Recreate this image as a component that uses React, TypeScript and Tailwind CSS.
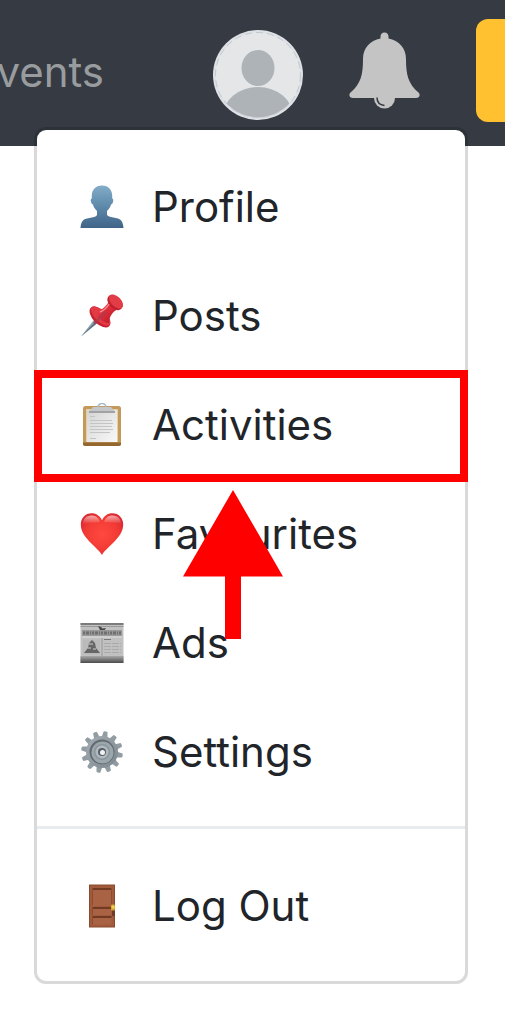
import type { ReactNode } from 'react';

type MenuItem = {
  label: string;
  icon: ReactNode;
  highlighted?: boolean;
};

const iconClass = 'h-11 w-11 shrink-0';

const ProfileIcon = () => (
  <svg viewBox="0 0 44 44" className={iconClass} aria-hidden="true">
    <defs>
      <linearGradient id="bust" x1="0" y1="0" x2="0" y2="1">
        <stop offset="0" stopColor="#82acc9" />
        <stop offset="0.55" stopColor="#5b85a6" />
        <stop offset="1" stopColor="#3f6487" />
      </linearGradient>
    </defs>
    <path
      d="M22 0.5c-6.5 0-10.2 4.3-10.2 10.3 0 1.2 0 2-.2 3-1 .2-1 1.4-.7 2.7.3 1.5.9 2.700 1.900 2.800.9 3 2.200 5 4.200 6.700v3.200c0 1.500-1 2.200-3 2.700l-8 1.900C2.500 34.500.9 38 .5 43h43c-.4-5-2-8.500-5.500-9.400l-8-1.900c-2-.5-3-1.200-3-2.700V26c2-1.700 3.300-3.700 4.200-6.700 1-.1 1.600-1.300 1.900-2.800.3-1.300.3-2.500-.7-2.700-.2-1-.2-1.800-.2-3C32.200 4.800 28.500.5 22 .5z"
      fill="url(#bust)"
    />
  </svg>
);

const PinIcon = () => (
  <svg viewBox="0 0 44 44" className={iconClass} aria-hidden="true">
    <defs>
      <linearGradient id="pinBody" x1="0" y1="0" x2="1" y2="1">
        <stop offset="0" stopColor="#f0525a" />
        <stop offset="0.5" stopColor="#dc2b38" />
        <stop offset="1" stopColor="#b01626" />
      </linearGradient>
    </defs>
    <path d="M1 42.500L17 22l4 4z" fill="#8fa3b1" />
    <path d="M1 42.500L19 24l2 2z" fill="#5f7484" />
    <ellipse cx="20" cy="23" rx="13" ry="7" transform="rotate(45 20 23)" fill="#c91f2f" />
    <ellipse cx="20.500" cy="22" rx="12.500" ry="5.500" transform="rotate(45 20.500 22)" fill="#e23a45" />
    <path d="M15 17c6 0 11-4 14-10l9 8c-6 3-9 8-9 14-6 0-12-6-14-12z" fill="url(#pinBody)" />
    <ellipse cx="35" cy="8.500" rx="9" ry="6" transform="rotate(45 35 8.500)" fill="#c31f2f" />
    <ellipse cx="36" cy="7.500" rx="8.500" ry="5" transform="rotate(45 36 7.500)" fill="#e23c46" />
    <path d="M13 28.500l12-12 2 2-12 12z" fill="#a83a4b" opacity="0.7" />
    <path d="M20 18c4-1.500 7-4.500 9-8" stroke="#f58a8e" strokeWidth="1.500" fill="none" />
  </svg>
);

const ClipboardIcon = () => (
  <svg viewBox="0 0 44 44" className={iconClass} aria-hidden="true">
    <defs>
      <linearGradient id="paper" x1="0" y1="0" x2="1" y2="1">
        <stop offset="0" stopColor="#d4d4d4" />
        <stop offset="1" stopColor="#f8f8f8" />
      </linearGradient>
    </defs>
    <rect x="3" y="3" width="38" height="40" rx="2.500" fill="#c49a5c" />
    <path d="M3 39.500h38v1a2.500 2.500 0 0 1-2.500 2.500h-33A2.500 2.500 0 0 1 3 40.500z" fill="#94672f" />
    <rect x="6" y="6" width="32" height="33" fill="#e7cfa5" />
    <rect x="7" y="7" width="30" height="32" fill="url(#paper)" />
    <path d="M18 4.500a4 4 0 0 1 8 0" fill="none" stroke="#a9bccb" strokeWidth="1.700" />
    <path d="M13 4h18l4 4.500H9z" fill="#c4c7ca" />
    <path d="M9 8h26v2H9z" fill="#a2a2a2" />
    <g stroke="#c4c4c4" strokeWidth="1">
      <path d="M10 13.500h5M10 17.500h22M10 20.500h23M10 23.500h22M10 26.500h23M10 29.500h20M10 35.500h6" />
    </g>
  </svg>
);

const HeartIcon = () => (
  <svg viewBox="0 0 44 44" className={iconClass} aria-hidden="true">
    <defs>
      <radialGradient id="heart" cx="0.5" cy="0.5" r="0.55">
        <stop offset="0" stopColor="#ff4a3f" />
        <stop offset="0.7" stopColor="#f23a35" />
        <stop offset="1" stopColor="#dc2b31" />
      </radialGradient>
      <linearGradient id="shine" x1="0" y1="0" x2="0" y2="1">
        <stop offset="0" stopColor="#fff" stopOpacity="0.6" />
        <stop offset="1" stopColor="#fff" stopOpacity="0" />
      </linearGradient>
    </defs>
    <path
      d="M22 43C18 35.500.8 26 .8 12.500.8 6 5.600 1.300 11.500 1.300c5 0 8.500 2.700 10.500 7 2-4.300 5.500-7 10.500-7 5.900 0 10.700 4.700 10.700 11.200C43.200 26 26 35.500 22 43z"
      fill="url(#heart)"
    />
    <path d="M3 12c0-5 3.500-8.500 8.500-8.500 4 0 7 2 8.500 6.500-5 1-12 0-17 2zM24 10c1.500-4.500 4.500-6.500 8.500-6.500 5 0 8.500 3.500 8.500 8.500-5-2-12-1-17-2z" fill="url(#shine)" />
  </svg>
);

const NewspaperIcon = () => (
  <svg viewBox="0 0 44 44" className={iconClass} aria-hidden="true">
    <defs>
      <linearGradient id="fold" x1="0" y1="0" x2="0" y2="1">
        <stop offset="0" stopColor="#a8a8a8" />
        <stop offset="1" stopColor="#4b4b4b" />
      </linearGradient>
    </defs>
    <path d="M0.500 2h43v40H0.500z" fill="#c1c1c1" />
    <path d="M0.500 2h43v2H0.500z" fill="#7c7c7c" />
    <path d="M0.500 5.500h43" stroke="#999" />
    <path d="M18 5l3 1 1.500 1.500L26 7l-2 3-4-1z" fill="#474747" />
    <path d="M2 9h40v6H2z" fill="#999" />
    <path d="M3 12h38" stroke="#6f6f6f" strokeWidth="3" strokeDasharray="2 1 3 1 1 1" />
    <path d="M2 16h40" stroke="#ddd" />
    <path d="M3 18.500h17v15H3z" fill="#bababa" />
    <path d="M4 32l4-5 1-5 3-3 3 3 1 5 4 5z" fill="#666" />
    <path d="M9 23h4M8 27h3m2 1h3" stroke="#aaa" strokeWidth="1.500" />
    <path d="M22 17v18" stroke="#999" />
    <path d="M24 18.500h7" stroke="#777" />
    <path d="M24 22.500h17M24 25.500h17M24 28.500h17M24 31.500h17" stroke="#aaa" strokeDasharray="7 1" />
    <path d="M0.500 35h43v7H0.500z" fill="url(#fold)" />
  </svg>
);

const teeth = [0, 30, 60, 90, 120, 150, 180, 210, 240, 270, 300, 330];

const GearIcon = () => (
  <svg viewBox="0 0 44 44" className={iconClass} aria-hidden="true">
    <defs>
      <linearGradient id="gear" x1="0" y1="0" x2="1" y2="1">
        <stop offset="0" stopColor="#a4adb3" />
        <stop offset="1" stopColor="#7c868d" />
      </linearGradient>
    </defs>
    {teeth.map((angle) => (
      <path
        key={angle}
        d="M19 8l1-6.500q2-1 4 0L25 8z"
        transform={`rotate(${angle + 10} 22 22)`}
        fill="#929ca3"
      />
    ))}
    <circle cx="22" cy="22" r="16" fill="url(#gear)" />
    <circle cx="22" cy="22" r="12.500" fill="#626a70" />
    <circle cx="22.500" cy="22.500" r="11" fill="#9ca6ad" />
    <circle cx="22" cy="22" r="8" fill="#8a959c" />
    <circle cx="22" cy="22" r="6.500" fill="#b2bac0" />
    <circle cx="22" cy="22" r="4" fill="#58616a" />
    <circle cx="22.500" cy="22.500" r="2.500" fill="#f1f1f1" />
  </svg>
);

const DoorIcon = () => (
  <svg viewBox="0 0 44 44" className={iconClass} aria-hidden="true">
    <path d="M9 0.500h26v43H9z" fill="#8b4a2f" />
    <path d="M10 1.500h24v41H10z" fill="#a05a3c" />
    <path d="M12.500 4h19v18h-19zM12.500 23h19v8h-19zM12.500 32.500h19v8h-19z" fill="#a96243" />
    <path d="M12.500 5h19M12.500 24h19M12.500 33h19" stroke="#713a22" strokeWidth="2" />
    <path d="M12.500 4v17M31.500 4v17M12.500 25v6M12.500 34v6" stroke="#8c4c31" />
    <path d="M32 26h3v6h-3z" fill="#6f3c25" />
    <rect x="31" y="20.500" width="4" height="6" rx="1" fill="#d3a72e" />
    <circle cx="33" cy="23" r="1.500" fill="#f0cf57" />
  </svg>
);

const BellIcon = () => (
  <svg viewBox="0 0 71 82" className="h-[82px] w-[71px]" aria-hidden="true">
    <path
      d="M35.500 0.500c-2.600 0-4 1.800-4 4v2C21 8.500 14 16 14 27c0 15-2 25-12.500 33.500C-1 63 1 66 4 66h63c3 0 5-3 2.500-5.500C59 52 57 42 57 27c0-11-7-18.500-17.500-20.500v-2c0-2.200-1.400-4-4-4z"
      fill="#c4c4c4"
    />
    <circle cx="35.500" cy="66" r="10.500" fill="#c4c4c4" />
    <path d="M28 65.500c0 4.500 3 7.500 7.500 8" fill="none" stroke="#343a40" strokeWidth="1.500" />
  </svg>
);

const AvatarIcon = () => (
  <svg viewBox="0 0 90 90" className="h-[90px] w-[90px]" aria-hidden="true">
    <defs>
      <clipPath id="face">
        <circle cx="45" cy="45" r="42.500" />
      </clipPath>
    </defs>
    <circle cx="45" cy="45" r="45" fill="#dee2e6" />
    <circle cx="45" cy="45" r="42.500" fill="#e4e6e8" />
    <g clipPath="url(#face)" fill="#adb3b7">
      <ellipse cx="45" cy="38" rx="16.500" ry="18" />
      <ellipse cx="45" cy="86" rx="35" ry="29" />
    </g>
    <circle cx="45" cy="45" r="42.500" fill="none" stroke="#c3c8cf" strokeDasharray="7 4" />
  </svg>
);

const items: MenuItem[] = [
  { label: 'Profile', icon: <ProfileIcon /> },
  { label: 'Posts', icon: <PinIcon /> },
  { label: 'Activities', icon: <ClipboardIcon />, highlighted: true },
  { label: 'Favourites', icon: <HeartIcon /> },
  { label: 'Ads', icon: <NewspaperIcon /> },
  { label: 'Settings', icon: <GearIcon /> },
];

// Red frame and arrow pointing at the highlighted row
const Callout = () => (
  <span className="pointer-events-none absolute -inset-x-[3px] top-0 -bottom-[3px] z-10 border-8 border-[#ff0000]">
    <svg viewBox="0 0 100 149" className="absolute top-28 left-[141px] h-[149px] w-[100px]" aria-hidden="true">
      <path d="M50 0l50 86.500H58V149H42V86.500H0z" fill="#ff0000" />
    </svg>
  </span>
);

const MenuRow = ({ label, icon, highlighted }: MenuItem) => (
  <li className="relative">
    <a href="#" className="flex h-[109px] items-center gap-7 px-[43px] text-[42px] text-[#212529]">
      {icon}
      <span>{label}</span>
    </a>
    {highlighted && <Callout />}
  </li>
);

function App() {
  return (
    <div className="min-h-screen w-full overflow-hidden bg-white font-['Inter',sans-serif]">
      <header className="flex h-[146px] items-center overflow-hidden bg-[#363a42]">
        <a href="#" className="flex w-[104px] shrink-0 justify-end overflow-hidden pb-1 text-[42px] text-[#999c9f]">
          Events
        </a>
        <button type="button" aria-label="Account" className="mt-1 ml-[109px] shrink-0 rounded-full">
          <AvatarIcon />
        </button>
        <button type="button" aria-label="Notifications" className="ml-[46px] shrink-0">
          <BellIcon />
        </button>
        <button
          type="button"
          aria-label="Create"
          className="-mr-4 mb-1.5 ml-14 h-[103px] min-w-11 flex-1 rounded-xl bg-[#ffc130]"
        />
      </header>

      <nav className="relative -mt-[19px] mr-[37px] ml-[34px] rounded-xl border-[3px] border-black/15 bg-white bg-clip-padding pt-[22px] pb-[21px]">
        <ul>
          {items.map((item) => (
            <MenuRow key={item.label} {...item} />
          ))}
        </ul>
        <hr className="mt-5 mb-[22px] border-t-[3px] border-[#e9ecef]" />
        <ul>
          <MenuRow label="Log Out" icon={<DoorIcon />} />
        </ul>
      </nav>
    </div>
  );
}

export default App;
